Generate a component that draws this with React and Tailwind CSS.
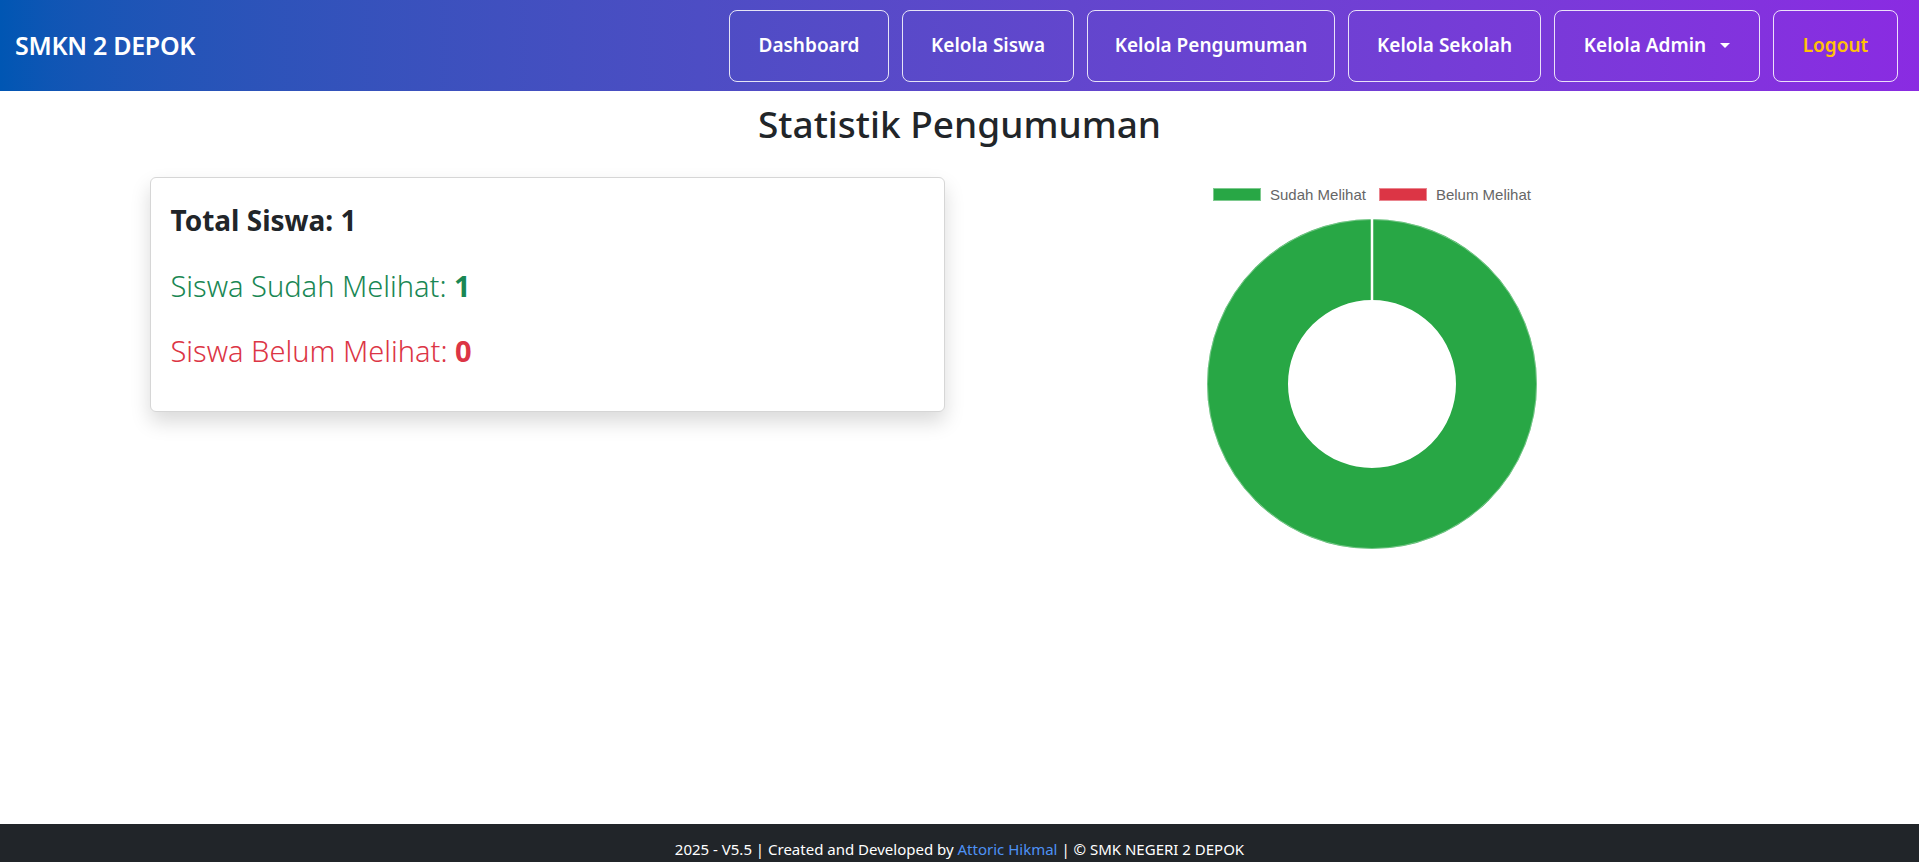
import React from "react";

const font = { fontFamily: '"Noto Sans", "Liberation Sans", sans-serif' };

const navItems = [
  { label: "Dashboard", w: "w-[160px]" },
  { label: "Kelola Siswa", w: "w-[172px]" },
  { label: "Kelola Pengumuman", w: "w-[248px]" },
  { label: "Kelola Sekolah", w: "w-[193px]" },
  { label: "Kelola Admin", w: "w-[206px]", dropdown: true },
];

function Navbar() {
  return (
    <nav className="h-[91px] bg-linear-to-r from-[#0056b3] to-[#8a2be2] flex items-center justify-between pl-[15px] pr-[21px]">
      <a className="text-white text-[25px] font-semibold tracking-[-0.3px]">SMKN 2 DEPOK</a>
      <div className="flex gap-[13px]">
        {navItems.map((item) => (
          <a
            key={item.label}
            className={`${item.w} h-[72px] flex items-center justify-center border border-white/85 rounded-[8px] text-white text-[19px] font-semibold`}
          >
            {item.label}
            {item.dropdown && (
              <span className="ml-[14px] w-0 h-0 border-l-[5px] border-r-[5px] border-t-[5px] border-l-transparent border-r-transparent border-t-white"></span>
            )}
          </a>
        ))}
        <a className="w-[125px] h-[72px] flex items-center justify-center border border-white/85 rounded-[8px] text-[#ffc107] text-[19px] font-semibold">
          Logout
        </a>
      </div>
    </nav>
  );
}

function StatCard() {
  return (
    <div className="bg-white border border-[#d6d6d6] rounded-[6px] shadow-[0_10px_20px_rgba(0,0,0,0.15)] px-[20px] pt-[24px] pb-[42px]">
      <h4 className="text-[28px] leading-[36px] font-bold text-[#212529]">Total Siswa: 1</h4>
      <p className="mt-[29px] text-[29px] leading-[37px] font-light text-[#198754]">
        Siswa Sudah Melihat: <span className="font-bold">1</span>
      </p>
      <p className="mt-[28px] text-[29px] leading-[37px] font-light text-[#dc3545]">
        Siswa Belum Melihat: <span className="font-bold">0</span>
      </p>
    </div>
  );
}

function Donut() {
  return (
    <svg width="330" height="330" viewBox="0 0 330 330">
      <circle cx="165" cy="165" r="124.5" fill="none" stroke="#28a745" strokeWidth="81" />
      <circle cx="165" cy="165" r="164.5" fill="none" stroke="#ffffff" strokeOpacity="0.35" strokeWidth="1" />
      <line x1="165" y1="0" x2="165" y2="82" stroke="#ffffff" strokeWidth="2.5" />
    </svg>
  );
}

function ChartPanel() {
  return (
    <div className="flex flex-col items-center pt-[10px]">
      <div
        className="flex items-center gap-[13px] h-[15px] text-[15px] leading-none text-[#666666]"
        style={{ fontFamily: '"Liberation Sans", Arial, sans-serif' }}
      >
        <div className="flex items-center gap-[9px]">
          <span className="w-[48px] h-[13px] bg-[#28a745] border border-white/40"></span>
          <span>Sudah Melihat</span>
        </div>
        <div className="flex items-center gap-[9px]">
          <span className="w-[48px] h-[13px] bg-[#dc3545] border border-white/40"></span>
          <span>Belum Melihat</span>
        </div>
      </div>
      <div className="mt-[17px]">
        <Donut />
      </div>
    </div>
  );
}

export default function App() {
  return (
    <div className="min-h-[862px] flex flex-col bg-white" style={font}>
      <Navbar />
      <main className="flex-1">
        <h2 className="mt-[9px] text-center text-[37px] leading-[48px] font-medium text-[#212529]">
          Statistik Pengumuman
        </h2>
        <div className="w-[1650px] mx-auto flex mt-[29px]">
          <div className="w-1/2 px-[15px]">
            <StatCard />
          </div>
          <div className="w-1/2 px-[15px]">
            <ChartPanel />
          </div>
        </div>
      </main>
      <footer className="h-[38px] bg-[#212529] text-white text-[15px] leading-[24px] text-center pt-[13px] overflow-hidden">
        2025 - V5.5 | Created and Developed by <a className="text-[#4e92f5]">Attoric Hikmal</a> | © SMK NEGERI 2 DEPOK
      </footer>
    </div>
  );
}
